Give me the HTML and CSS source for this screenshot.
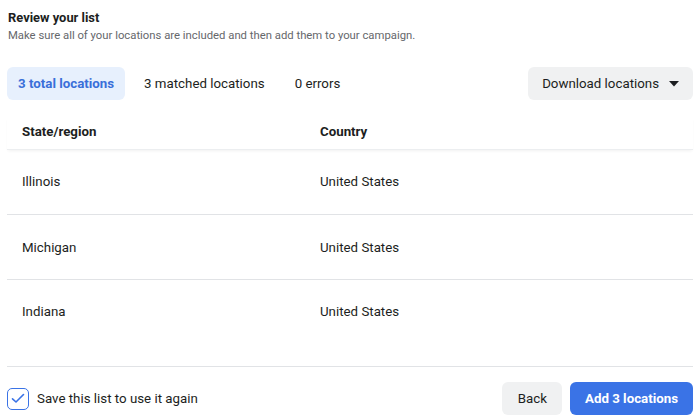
FILE: index.html
```html
<!DOCTYPE html>
<html>
<head>
<meta charset="utf-8">
<link rel="stylesheet" href="styles.css">
</head>
<body>
<div class="page">
  <header class="intro">
    <h1 class="title">Review your list</h1>
    <p class="subtitle">Make sure all of your locations are included and then add them to your campaign.</p>
  </header>
  <div class="toolbar">
    <div class="tabs">
      <span class="tab tab-active">3 total locations</span>
      <span class="tab">3 matched locations</span>
      <span class="tab">0 errors</span>
    </div>
    <button class="btn btn-gray download">Download locations
      <svg class="caret" width="10" height="6" viewBox="0 0 10 6"><path d="M0 0 L10 0 L5 5.5 Z" fill="#1c1e21"/></svg>
    </button>
  </div>
  <div class="table">
    <div class="row head"><span class="c1">State/region</span><span class="c2">Country</span></div>
    <div class="row"><span class="c1">Illinois</span><span class="c2">United States</span></div>
    <div class="row"><span class="c1">Michigan</span><span class="c2">United States</span></div>
    <div class="row last"><span class="c1">Indiana</span><span class="c2">United States</span></div>
  </div>
  <footer class="footer">
    <label class="check">
      <span class="box"><svg width="14" height="11" viewBox="0 0 14 11"><path d="M1.5 5.8 L5 9 L12.5 1.5" fill="none" stroke="#3a73e6" stroke-width="1.6" stroke-linecap="round" stroke-linejoin="round"/></svg></span>
      <span class="check-label">Save this list to use it again</span>
    </label>
    <div class="actions">
      <button class="btn btn-gray back">Back</button>
      <button class="btn btn-blue">Add 3 locations</button>
    </div>
  </footer>
</div>
</body>
</html>
```
FILE: styles.css
```css
* { box-sizing: border-box; }
html, body { margin: 0; padding: 0; background: #fff; }
body { font-family: Roboto, "Liberation Sans", Arial, sans-serif; color: #1c1e21; width: 700px; height: 420px; overflow: hidden; }
.page { padding: 10px 7px 0 7px; }
.intro { padding-left: 1px; }
.title { margin: 0; font-size: 12.9px; font-weight: 700; line-height: 16px; color: #1c1e21; }
.subtitle { margin: 3px 0 0 0; font-size: 11.3px; line-height: 14px; color: #65676b; }
.toolbar { display: flex; justify-content: space-between; align-items: center; margin-top: 24px; }
.tabs { display: flex; align-items: center; }
.tab { display: inline-flex; align-items: center; height: 33px; padding: 0 11px; font-size: 13.3px; color: #1c1e21; margin-right: 8px; border-radius: 6px; }
.tab-active { background: #e7f0fd; color: #3a6fd9; font-weight: 700; }
.btn { font-family: inherit; border: none; border-radius: 6px; height: 33px; font-size: 13.3px; cursor: pointer; display: inline-flex; align-items: center; }
.btn-gray { background: #f0f1f2; color: #1c1e21; padding: 0 14px; }
.btn-blue { background: #3a73e6; color: #fff; font-weight: 700; padding: 0 15px; }
.back { padding: 0 15px 0 16px; }
.download { padding: 0 14px 0 14px; }
.caret { margin-left: 10px; }
.table { margin-top: 17px; }
.row { display: flex; align-items: center; height: 65px; border-bottom: 1px solid #e1e3e6; font-size: 13.3px; padding-left: 15px; }
.row.head { height: 33px; font-weight: 700; align-items: flex-start; padding-top: 7px; box-shadow: 0 2px 3px -1px rgba(0,0,0,0.06); border-bottom: 1px solid #eceef0; }
.row.head + .row { padding-bottom: 2px; }
.row.last { height: 87px; align-items: flex-start; padding-top: 24px; }
.c1 { width: 298px; }
.footer { display: flex; justify-content: space-between; align-items: center; margin-top: 15px; }
.check { display: flex; align-items: center; }
.box { width: 22px; height: 22px; border: 1.5px solid #3a73e6; border-radius: 5px; display: inline-flex; align-items: center; justify-content: center; }
.check-label { margin-left: 8px; font-size: 13.3px; color: #1c1e21; }
.actions { display: flex; gap: 8px; }
```
